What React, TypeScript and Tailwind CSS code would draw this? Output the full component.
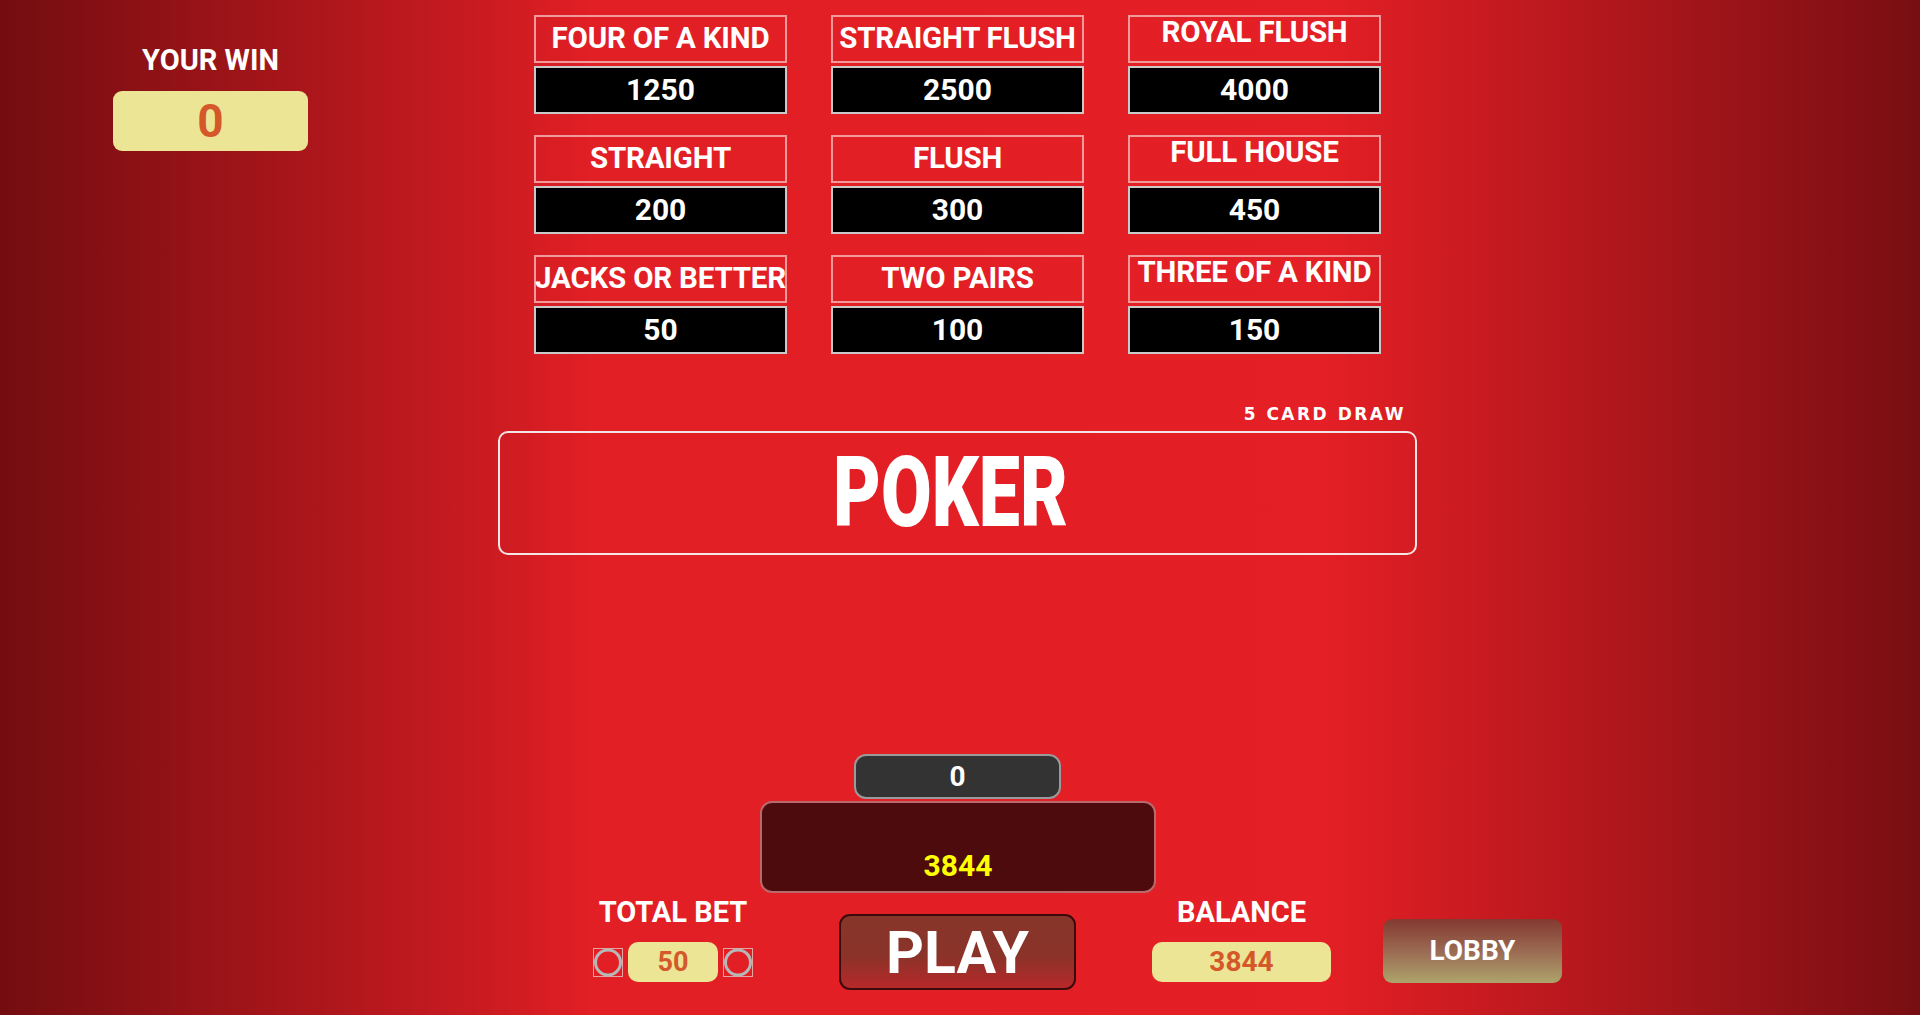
const payRows: [string, number][][] = [
  [
    ["FOUR OF A KIND", 1250],
    ["STRAIGHT FLUSH", 2500],
    ["ROYAL FLUSH", 4000],
  ],
  [
    ["STRAIGHT", 200],
    ["FLUSH", 300],
    ["FULL HOUSE", 450],
  ],
  [
    ["JACKS OR BETTER", 50],
    ["TWO PAIRS", 100],
    ["THREE OF A KIND", 150],
  ],
];

function BetCircle() {
  return (
    <svg width="30" height="29" viewBox="0 0 30 29" className="shrink-0">
      <rect x="0.5" y="0.5" width="29" height="28" fill="none" stroke="#e4a5a5" strokeWidth="1" />
      <ellipse cx="15" cy="14.5" rx="12.5" ry="12.5" fill="none" stroke="#b7b7b7" strokeWidth="3" />
    </svg>
  );
}

function PayCell({ label, value, col }: { label: string; value: number; col: number }) {
  return (
    <div className="flex flex-col gap-[3px]">
      <div
        className={`h-[48px] border-2 border-[#f09a9b] flex items-center justify-center whitespace-nowrap text-white font-bold text-[29.5px] tracking-[-0.2px] leading-none ${
          col === 2 ? "pb-[12px]" : "pb-0"
        }`}
      >
        {label}
      </div>
      <div className="h-[48px] bg-black border-2 border-[#c9c9c9] flex items-center justify-center text-white font-bold text-[30px] leading-none">
        {value}
      </div>
    </div>
  );
}

export default function App() {
  return (
    <div className="w-[1920px] h-[1015px] overflow-hidden flex flex-col [font-family:Roboto,'Liberation_Sans',sans-serif] bg-[linear-gradient(to_right,#730d10_0%,#c91b21_25%,#e21f25_31%,#e41f25_69%,#a9161b_86%,#780e12_100%)]">
      {/* top: your win + paytable */}
      <div className="flex items-start pt-[15px]">
        <div className="ml-[113px] mt-[31px] w-[195px] flex flex-col items-center">
          <div className="text-white font-bold text-[29px] leading-none">YOUR WIN</div>
          <div className="mt-[16px] w-full h-[60px] rounded-[9px] bg-[#ece596] flex items-center justify-center text-[#d4582a] font-bold text-[46px] leading-none">
            0
          </div>
        </div>
        <div className="ml-[226px] grid grid-cols-[repeat(3,253px)] gap-x-[44px] gap-y-[21px]">
          {payRows.map((row) =>
            row.map(([label, value], i) => <PayCell key={label} label={label} value={value} col={i} />)
          )}
        </div>
      </div>

      {/* title */}
      <div className="ml-[498px] w-[919px] mt-[51px] flex flex-col">
        <div className="self-end pr-[11px] text-white font-bold text-[17px] leading-[18px] tracking-[2.5px] [font-family:'DejaVu_Sans',sans-serif]">
          5 CARD DRAW
        </div>
        <div className="mt-[8px] h-[124px] border-2 border-[#f4e6e6] rounded-[10px] flex items-center justify-center pr-[14px]">
          <span className="inline-block scale-x-75 text-white font-black text-[98px] leading-none">POKER</span>
        </div>
      </div>

      {/* bet display */}
      <div className="ml-[854px] mt-[199px] w-[207px] h-[45px] rounded-[12px] bg-[#333333] border-2 border-[#9a9a9a] flex items-center justify-center text-white font-bold text-[28px] leading-none">
        0
      </div>
      <div className="ml-[760px] mt-[2px] w-[396px] h-[92px] rounded-[12px] bg-[#4e0b0d] border-2 border-[#b86a6a] flex flex-col items-center justify-end pb-[10px] text-[#ffff00] font-bold text-[30px] leading-none">
        3844
      </div>

      {/* bottom controls */}
      <div className="mt-[5px] flex items-start">
        <div className="ml-[593px] w-[160px] flex flex-col items-center">
          <div className="text-white font-bold text-[29px] leading-none whitespace-nowrap">TOTAL BET</div>
          <div className="mt-[15px] flex items-center gap-[5px]">
            <BetCircle />
            <div className="w-[90px] h-[40px] rounded-[10px] bg-[#ece596] flex items-center justify-center text-[#d4582a] font-bold text-[27px] leading-none">
              50
            </div>
            <BetCircle />
          </div>
        </div>
        <button className="ml-[86px] mt-[16px] w-[237px] h-[76px] rounded-[11px] border-2 border-[#3b0b0b] bg-[linear-gradient(to_bottom,#87352a_0%,#8a3329_55%,#b7282a_100%)] flex items-center justify-center text-white font-bold text-[59px] leading-none">
          PLAY
        </button>
        <div className="ml-[76px] w-[179px] flex flex-col items-center">
          <div className="text-white font-bold text-[29px] leading-none">BALANCE</div>
          <div className="mt-[15px] w-full h-[40px] rounded-[10px] bg-[#ece596] flex items-center justify-center text-[#d4582a] font-bold text-[28px] leading-none">
            3844
          </div>
        </div>
        <button className="ml-[52px] mt-[21px] w-[179px] h-[64px] rounded-[9px] bg-[linear-gradient(to_bottom,#843930_0%,#9a6a52_50%,#ada46c_100%)] flex items-center justify-center text-white font-bold text-[28px] leading-none">
          LOBBY
        </button>
      </div>
    </div>
  );
}
